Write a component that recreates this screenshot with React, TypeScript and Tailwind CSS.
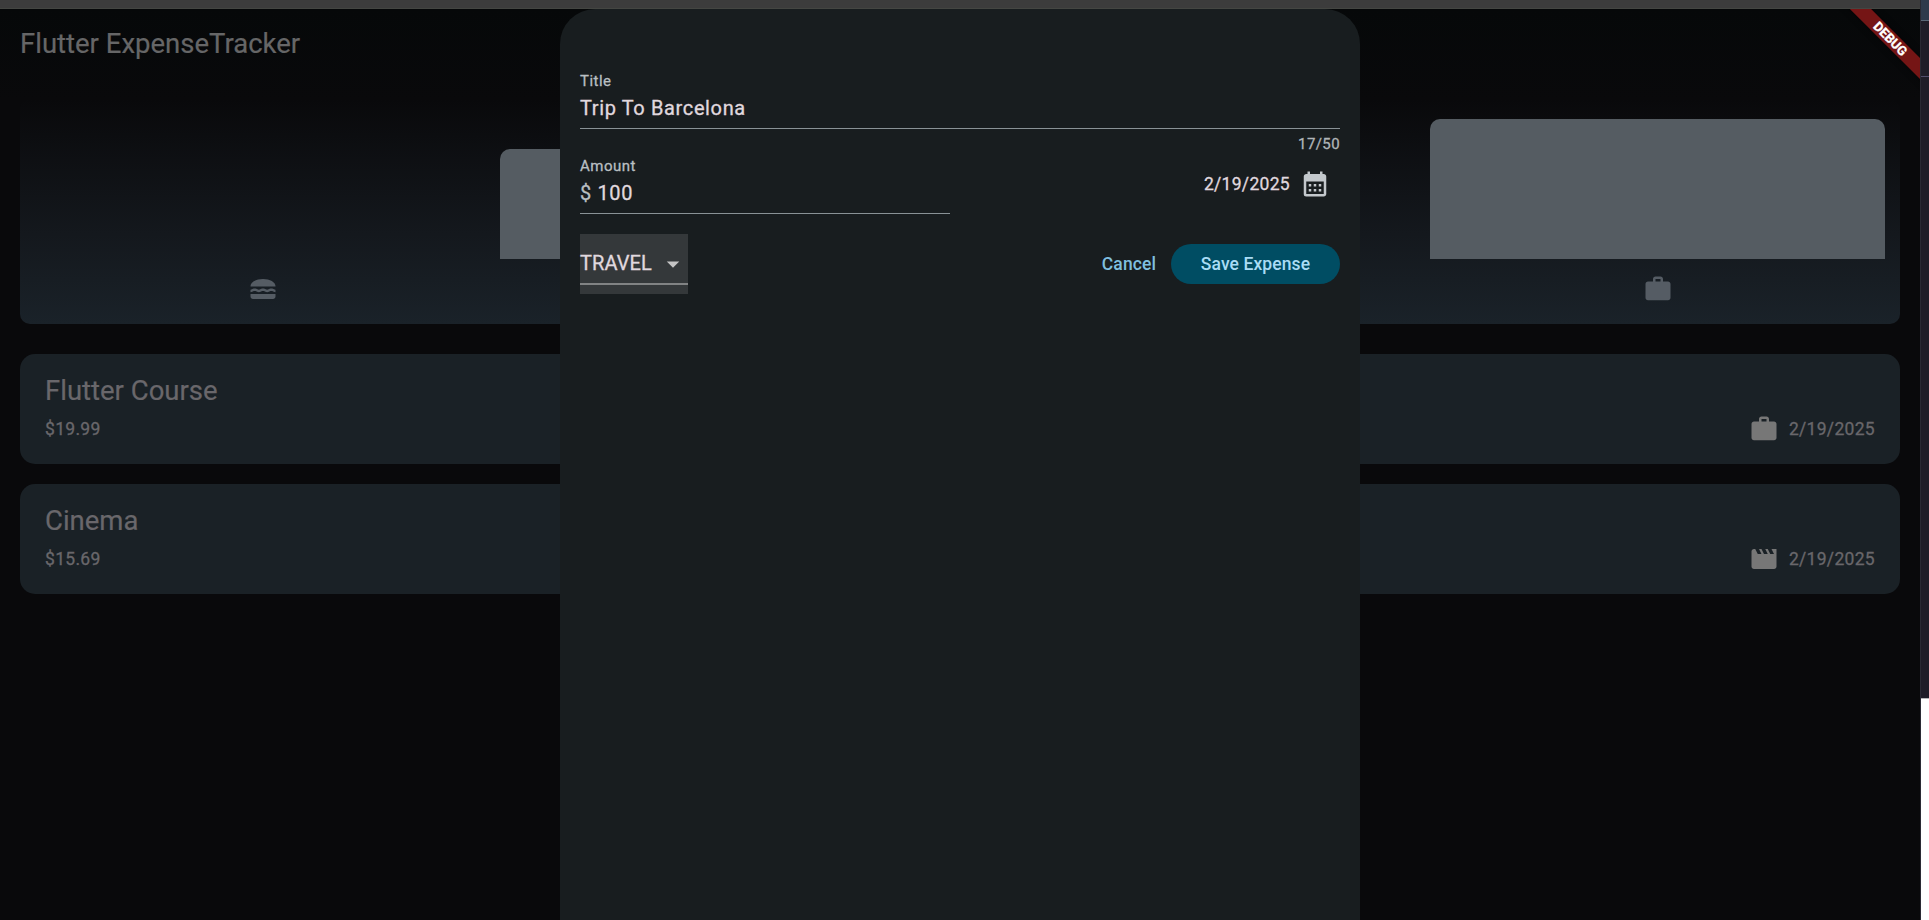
import type { ReactNode } from "react";
import {
  MdArrowDropDown,
  MdCalendarMonth,
  MdLunchDining,
  MdMovie,
  MdWork,
} from "react-icons/md";

const buckets: { key: string; height: number; icon: ReactNode }[] = [
  { key: "food", height: 0, icon: <MdLunchDining size={30} /> },
  { key: "leisure", height: 110, icon: <MdMovie size={30} /> },
  { key: "travel", height: 0, icon: null },
  { key: "work", height: 140, icon: <MdWork size={30} /> },
];

const expenses = [
  { title: "Flutter Course", amount: "$19.99", date: "2/19/2025", icon: <MdWork size={30} /> },
  { title: "Cinema", amount: "$15.69", date: "2/19/2025", icon: <MdMovie size={30} /> },
];

function Chart() {
  return (
    <section className="mx-5 mt-5 flex h-[225px] flex-col rounded-[10px] bg-linear-to-b from-[#1a2229]/0 via-[#14181d] via-60% to-[#1a2229] px-[10px] py-5">
      <div className="flex h-[140px] items-end">
        {buckets.map((b) => (
          <div key={b.key} className="flex-1 px-[5px]">
            <div className="rounded-t-[10px] bg-[#555c62]" style={{ height: b.height }} />
          </div>
        ))}
      </div>
      <div className="mt-[15px] flex h-[30px]">
        {buckets.map((b) => (
          <div key={b.key} className="flex flex-1 justify-center text-[#555c64]">
            {b.icon}
          </div>
        ))}
      </div>
    </section>
  );
}

function ExpenseCard({ title, amount, date, icon }: (typeof expenses)[number]) {
  return (
    <article className="h-[110px] rounded-[15px] bg-[#1a2126] px-[25px] pt-[19px] text-[#69676b]">
      <h2 className="text-[27.5px] leading-[35px] [-webkit-text-stroke:0.2px]">{title}</h2>
      <div className="mt-[6px] flex h-[30px] items-center justify-between text-[17.5px] tracking-[0.3125px] [-webkit-text-stroke:0.3px]">
        <span>{amount}</span>
        <span className="flex items-center gap-[10px]">
          <span className="text-[#777777]">{icon}</span>
          {date}
        </span>
      </div>
    </article>
  );
}

function DebugBanner() {
  return (
    <div className="absolute top-0 right-0 h-[90px] w-[90px] overflow-hidden">
      <div className="absolute top-[22px] right-[-50px] flex h-[15px] w-[160px] rotate-45 items-center justify-center bg-[#751515] pl-px text-[13px] leading-none font-bold text-white shadow-[0_0_6px_rgba(0,0,0,0.5)] [-webkit-text-stroke:0.3px]">
        DEBUG
      </div>
    </div>
  );
}

function ExpenseSheet() {
  return (
    <div className="absolute inset-y-0 left-[560px] w-[800px] rounded-t-[35px] bg-[#181d1f] px-5 pt-[62px] text-[#e0d9df] [-webkit-text-stroke:0.3px]">
      <div className="border-b border-[#899296] pb-[5px]">
        <div className="text-[15px] leading-5 tracking-[0.47px] text-[#b9bfc2]">Title</div>
        <div className="mt-[2px] text-[20px] leading-[30px] tracking-[0.625px]">Trip To Barcelona</div>
      </div>
      <div className="pt-[5px] text-right text-[15px] leading-5 tracking-[0.4px] text-[#b0b5b8]">17/50</div>

      <div className="mt-[2px] flex justify-between">
        <div className="w-[370px] border-b border-[#899296] pb-[5px]">
          <div className="text-[15px] leading-5 tracking-[0.47px] text-[#b9bfc2]">Amount</div>
          <div className="mt-[2px] text-[20px] leading-[30px] tracking-[0.625px]">
            <span className="text-[#b9bfc2]">$ </span>100
          </div>
        </div>
        <div className="flex h-[56px] items-center gap-[10px] pr-[10px] text-[17.5px] tracking-[0.3125px]">
          2/19/2025
          <MdCalendarMonth size={30} className="text-[#c3c8cc]" />
        </div>
      </div>

      <div className="mt-5 flex items-center">
        <div className="h-[60px] w-[107.5px] bg-[#34383a]">
          <div className="flex h-[51px] items-center justify-between border-b-2 border-[#818384] pt-2 text-[20px]">
            <span className="tracking-[0.1px]">TRAVEL</span>
            <MdArrowDropDown size={30} className="relative top-px text-[#c4c4c4]" />
          </div>
        </div>
        <div className="ml-auto flex items-center gap-[15px] text-[17.5px] font-medium tracking-[0.1px] [-webkit-text-stroke:0]">
          <button className="text-[#7fbfdf]">Cancel</button>
          <button className="h-10 w-[169px] rounded-full bg-[#004d63] text-[#a9dcf5]">Save Expense</button>
        </div>
      </div>
    </div>
  );
}

export default function App() {
  return (
    <div className="flex h-[920px] w-[1929px] overflow-hidden bg-[#09090b] font-[Roboto,sans-serif]">
      <div className="flex w-[1920px] flex-col">
        <div className="h-[9px] border-b border-[#444642] bg-[#3c3c3c]" />
        <main className="relative flex-1 bg-linear-to-b from-[#060809] to-[#09090b] to-10%">
          <header className="flex h-[70px] items-center px-5 pb-[2px]">
            <h1 className="text-[27.5px] leading-[35px] text-[#666667] [-webkit-text-stroke:0.2px]">Flutter ExpenseTracker</h1>
          </header>
          <Chart />
          <div className="mx-5 mt-[30px] flex flex-col gap-5">
            {expenses.map((e) => (
              <ExpenseCard key={e.title} {...e} />
            ))}
          </div>
          <ExpenseSheet />
          <DebugBanner />
        </main>
      </div>
      <aside className="flex flex-1 flex-col border-l border-[#2a2a34]">
        <div className="h-[21px] border-b border-[#5a6878] bg-[#2f3a4c]" />
        <div className="h-14 border-b border-[#514d6c] bg-[#1f1d28]" />
        <div className="h-[621px] bg-[#1f1d28]" />
        <div className="flex-1 border-t border-[#b5b5b8] bg-white" />
      </aside>
    </div>
  );
}
